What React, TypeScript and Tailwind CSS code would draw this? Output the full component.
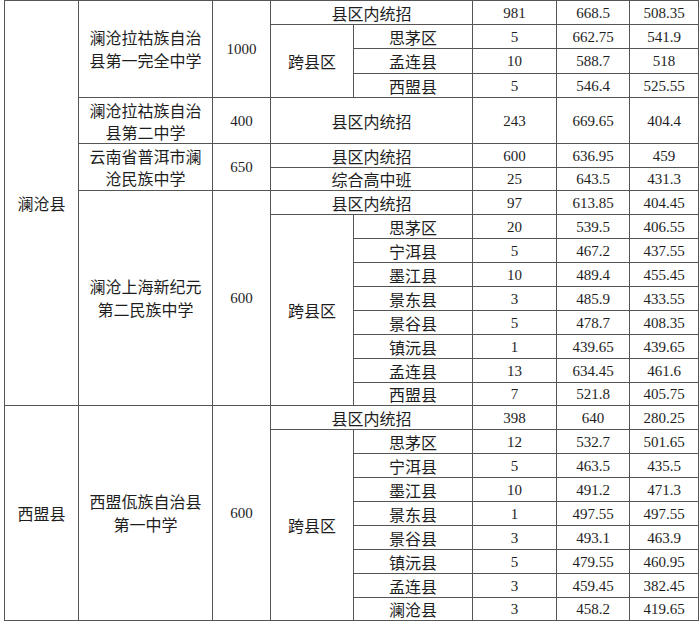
import React from "react";

const cn = "font-['Noto_Sans_CJK_SC',sans-serif] text-[16px]";
const num = "font-['Liberation_Serif',serif] text-[15px]";
const bd = "border border-[#555]";

type Sub = [string, string, string, string];

function NumCells({ a, b, c }: { a: string; b: string; c: string }) {
  return (
    <>
      <td className={`${bd} ${num} text-center`}>{a}</td>
      <td className={`${bd} ${num} text-center`}>{b}</td>
      <td className={`${bd} ${num} text-center`}>{c}</td>
    </>
  );
}

const H = ["h-[24px]", "h-[24px]", "h-[25px]", "h-[24px]"];

export default function App() {
  const g1: Sub[] = [
    ["思茅区", "5", "662.75", "541.9"],
    ["孟连县", "10", "588.7", "518"],
    ["西盟县", "5", "546.4", "525.55"],
  ];
  const g4: Sub[] = [
    ["思茅区", "20", "539.5", "406.55"],
    ["宁洱县", "5", "467.2", "437.55"],
    ["墨江县", "10", "489.4", "455.45"],
    ["景东县", "3", "485.9", "433.55"],
    ["景谷县", "5", "478.7", "408.35"],
    ["镇沅县", "1", "439.65", "439.65"],
    ["孟连县", "13", "634.45", "461.6"],
    ["西盟县", "7", "521.8", "405.75"],
  ];
  const g5: Sub[] = [
    ["思茅区", "12", "532.7", "501.65"],
    ["宁洱县", "5", "463.5", "435.5"],
    ["墨江县", "10", "491.2", "471.3"],
    ["景东县", "1", "497.55", "497.55"],
    ["景谷县", "3", "493.1", "463.9"],
    ["镇沅县", "5", "479.55", "460.95"],
    ["孟连县", "3", "459.45", "382.45"],
    ["澜沧县", "3", "458.2", "419.65"],
  ];
  return (
    <div className="w-[700px] h-[622px] bg-white overflow-hidden text-[#1e1e1e]">
      <table className="ml-[4px] w-[694px] table-fixed border-collapse leading-[20px]">
        <colgroup>
          <col className="w-[74px]" />
          <col className="w-[134px]" />
          <col className="w-[58px]" />
          <col className="w-[83px]" />
          <col className="w-[119px]" />
          <col className="w-[84px]" />
          <col className="w-[73px]" />
          <col className="w-[69px]" />
        </colgroup>
        <tbody>
          <tr className="h-[24px]">
            <td rowSpan={16} className={`${bd} ${cn} text-center`}>澜沧县</td>
            <td rowSpan={4} className={`${bd} ${cn} text-center leading-[23px]`}>
              澜沧拉祜族自治
              <br />
              县第一完全中学
            </td>
            <td rowSpan={4} className={`${bd} ${num} text-center`}>1000</td>
            <td colSpan={2} className={`${bd} ${cn} text-center`}>县区内统招</td>
            <NumCells a="981" b="668.5" c="508.35" />
          </tr>
          {g1.map((r, i) => (
            <tr key={r[0]} className={H[i + 1]}>
              {i === 0 && (
                <td rowSpan={3} className={`${bd} ${cn} text-center`}>跨县区</td>
              )}
              <td className={`${bd} ${cn} text-center`}>{r[0]}</td>
              <NumCells a={r[1]} b={r[2]} c={r[3]} />
            </tr>
          ))}
          <tr className="h-[46px]">
            <td className={`${bd} ${cn} text-center leading-[22px]`}>
              澜沧拉祜族自治
              <br />
              县第二中学
            </td>
            <td className={`${bd} ${num} text-center`}>400</td>
            <td colSpan={2} className={`${bd} ${cn} text-center`}>县区内统招</td>
            <NumCells a="243" b="669.65" c="404.4" />
          </tr>
          <tr className="h-[24px]">
            <td rowSpan={2} className={`${bd} ${cn} text-center leading-[22px]`}>
              云南省普洱市澜
              <br />
              沧民族中学
            </td>
            <td rowSpan={2} className={`${bd} ${num} text-center`}>650</td>
            <td colSpan={2} className={`${bd} ${cn} text-center`}>县区内统招</td>
            <NumCells a="600" b="636.95" c="459" />
          </tr>
          <tr className="h-[23px]">
            <td colSpan={2} className={`${bd} ${cn} text-center`}>综合高中班</td>
            <NumCells a="25" b="643.5" c="431.3" />
          </tr>
          <tr className="h-[24px]">
            <td rowSpan={9} className={`${bd} ${cn} text-center leading-[23px]`}>
              澜沧上海新纪元
              <br />
              第二民族中学
            </td>
            <td rowSpan={9} className={`${bd} ${num} text-center`}>600</td>
            <td colSpan={2} className={`${bd} ${cn} text-center`}>县区内统招</td>
            <NumCells a="97" b="613.85" c="404.45" />
          </tr>
          {g4.map((r, i) => (
            <tr key={"a" + i} className={i === 7 ? "h-[23px]" : "h-[24px]"}>
              {i === 0 && (
                <td rowSpan={8} className={`${bd} ${cn} text-center`}>跨县区</td>
              )}
              <td className={`${bd} ${cn} text-center`}>{r[0]}</td>
              <NumCells a={r[1]} b={r[2]} c={r[3]} />
            </tr>
          ))}
          <tr className="h-[24px]">
            <td rowSpan={9} className={`${bd} ${cn} text-center`}>西盟县</td>
            <td rowSpan={9} className={`${bd} ${cn} text-center leading-[23px]`}>
              西盟佤族自治县
              <br />
              第一中学
            </td>
            <td rowSpan={9} className={`${bd} ${num} text-center`}>600</td>
            <td colSpan={2} className={`${bd} ${cn} text-center`}>县区内统招</td>
            <NumCells a="398" b="640" c="280.25" />
          </tr>
          {g5.map((r, i) => (
            <tr key={"b" + i} className={i === 7 ? "h-[23px]" : "h-[24px]"}>
              {i === 0 && (
                <td rowSpan={8} className={`${bd} ${cn} text-center`}>跨县区</td>
              )}
              <td className={`${bd} ${cn} text-center`}>{r[0]}</td>
              <NumCells a={r[1]} b={r[2]} c={r[3]} />
            </tr>
          ))}
        </tbody>
      </table>
    </div>
  );
}
